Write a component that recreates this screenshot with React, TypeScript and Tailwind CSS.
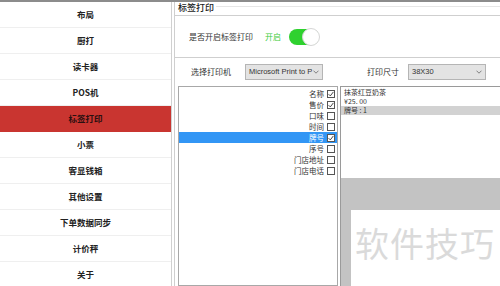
import React from "react";

const menu = ["布局", "厨打", "读卡器", "POS机", "标签打印", "小票", "客显钱箱", "其他设置", "下单数据同步", "计价秤", "关于"];

const fields: { label: string; checked: boolean; selected?: boolean }[] = [
  { label: "名称", checked: true },
  { label: "售价", checked: true },
  { label: "口味", checked: false },
  { label: "时间", checked: false },
  { label: "牌号", checked: true, selected: true },
  { label: "序号", checked: false },
  { label: "门店地址", checked: false },
  { label: "门店电话", checked: false },
];

const font = { fontFamily: '"Noto Sans CJK SC", "Liberation Sans", sans-serif' };

function Check({ checked }: { checked: boolean }) {
  return (
    <div className="w-[8px] h-[8px] border border-[#555] bg-white flex items-center justify-center">
      {checked && (
        <svg width="6" height="6" viewBox="0 0 6 6">
          <path d="M0.6 3.2 L2.3 4.9 L5.4 0.9" fill="none" stroke="#333" strokeWidth="0.9" />
        </svg>
      )}
    </div>
  );
}

function Chevron() {
  return (
    <svg width="6" height="4" viewBox="0 0 6 4">
      <path d="M0.5 0.7 L3 3.2 L5.5 0.7" fill="none" stroke="#666" strokeWidth="0.8" />
    </svg>
  );
}

export default function App() {
  return (
    <div className="w-[500px] h-[286px] overflow-hidden bg-white flex flex-col text-[#222]" style={font}>
      <div className="h-[2px] bg-[#8c8c8c] shrink-0" />
      <div className="flex flex-1 min-h-0">
        {/* Sidebar */}
        <div className="w-[172px] shrink-0 flex flex-col border-r border-[#d0d0d0]">
          {menu.map((m) => (
            <div
              key={m}
              className={`h-[26px] shrink-0 flex items-center justify-center text-[8.5px] font-bold border-b ${
                m === "标签打印" ? "bg-[#c93530] border-[#c93530] text-[#2a1010]" : "border-[#efefef] text-[#222]"
              }`}
            >
              {m}
            </div>
          ))}
        </div>
        <div className="w-[2px] shrink-0" />
        {/* Main */}
        <div className="flex-1 flex flex-col border-l border-[#cfcfcf] min-w-0">
          <div className="h-[13px] shrink-0 flex items-start">
            <span className="text-[9px] leading-[11px] ml-[3px] text-[#222] font-medium">标签打印</span>
            <div className="flex-1 h-[1px] bg-[#e6e6e6] mt-[4px] ml-[2px]" />
          </div>
          <div className="h-[43px] shrink-0 border-t border-b border-[#cfcfcf] flex items-center">
            <span className="text-[8px] ml-[14px] text-[#333]">是否开启标签打印</span>
            <span className="text-[8px] ml-[12px] text-[#3ccc3c]">开启</span>
            <div className="ml-[8px] w-[30px] h-[16px] rounded-full bg-[#2fd12f] relative">
              <div className="absolute right-[-1px] top-[-1px] w-[18px] h-[18px] rounded-full bg-white border border-[#d6d6d6]" />
            </div>
          </div>
          <div className="h-[28px] shrink-0 flex items-center">
            <span className="text-[8px] ml-[16px] text-[#333]">选择打印机</span>
            <div className="ml-[14px] w-[78px] h-[16px] bg-[#e3e3e3] border border-[#b5b5b5] flex items-center justify-between px-[3px]">
              <span className="text-[7.5px] text-[#333] whitespace-nowrap" style={{ fontFamily: '"Liberation Sans", sans-serif' }}>
                Microsoft Print to P
              </span>
              <Chevron />
            </div>
            <span className="text-[8px] ml-[44px] text-[#333]">打印尺寸</span>
            <div className="ml-[9px] w-[78px] h-[16px] bg-[#e3e3e3] border border-[#b5b5b5] flex items-center justify-between px-[3px]">
              <span className="text-[7.5px] text-[#333]" style={{ fontFamily: '"Liberation Sans", sans-serif' }}>
                38X30
              </span>
              <Chevron />
            </div>
          </div>
          <div className="flex-1 flex min-h-0">
            <div className="ml-[3px] w-[160px] shrink-0 border border-[#a8a8a8] bg-white pt-[1px]">
              {fields.map((f) => (
                <div
                  key={f.label}
                  className={`h-[11px] flex items-center justify-end pr-[2px] gap-[3px] ${f.selected ? "bg-[#3296f5] text-white" : "text-[#333]"}`}
                >
                  <span className="text-[7.5px] leading-none">{f.label}</span>
                  <Check checked={f.checked} />
                </div>
              ))}
            </div>
            <div className="ml-[2px] flex-1 border-l border-t border-[#9a9a9a] flex flex-col min-w-0">
              <div className="h-[91px] shrink-0 bg-white pt-[1px]">
                <div className="h-[9px] px-[3px] flex items-center text-[7px] leading-none text-[#333]">抹茶红豆奶茶</div>
                <div className="h-[9px] px-[3px] flex items-center text-[7px] leading-none text-[#333]">¥25. 00</div>
                <div className="h-[9px] px-[3px] flex items-center text-[7px] leading-none text-[#333] bg-[#d2d2d2]">牌号 : 1</div>
              </div>
              <div className="flex-1 bg-[#c3c3c3] pt-[32px] pl-[10px] flex flex-col">
                <div className="flex-1 bg-white flex items-start">
                  <span className="text-[34px] leading-none mt-[16px] ml-[4px] text-[#dadada] tracking-[1px]">软件技巧</span>
                </div>
              </div>
            </div>
          </div>
        </div>
      </div>
    </div>
  );
}
